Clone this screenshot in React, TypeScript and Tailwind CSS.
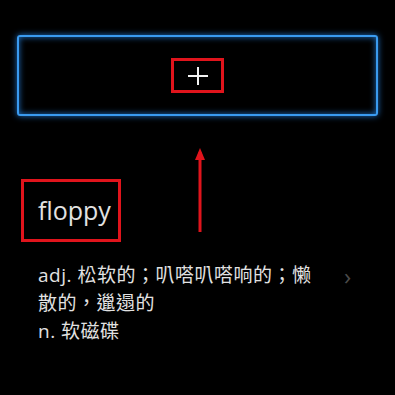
export default function App() {
  return (
    <div className="w-[395px] h-[395px] bg-black overflow-hidden pt-[35px] px-[17px] font-['Open_Sans','Noto_Sans_CJK_TC',sans-serif] text-[#e2e2e2]">
      <div className="h-[81px] rounded-[3px] border-2 border-[#3a9bf0] shadow-[0_0_6px_#1f6fc0,inset_0_0_6px_#1f6fc0] flex items-center justify-center">
        <div className="w-[53px] h-[35px] border-[3px] border-[#e0141c] flex items-center justify-center">
          <svg width="22" height="18" viewBox="0 0 22 18">
            <path d="M1 9H21M11 0V18" stroke="#f2f2f2" strokeWidth="2" />
          </svg>
        </div>
      </div>
      <div className="flex items-end mt-[34px] h-[92px]">
        <div className="ml-[4px] w-[100px] h-[63px] border-[3px] border-[#e0141c] flex items-center pl-[14px] text-[25px]">
          floppy
        </div>
        <svg className="ml-[74px] mb-[10px]" width="10" height="84" viewBox="0 0 10 84">
          <path d="M5 4V84" stroke="#e0141c" strokeWidth="3" />
          <path d="M0 12L5 0L10 12Z" fill="#e0141c" />
        </svg>
      </div>
      <div className="flex mt-[19px]">
        <div className="ml-[21px] w-[288px] text-[19px] leading-[28px] tracking-[0.5px]">
          <div>adj. 松软的；叭嗒叭嗒响的；懒散的，邋遢的</div>
          <div>n. 软磁碟</div>
        </div>
        <span className="ml-[18px] mt-[1px] text-[24px] leading-[28px] text-[#4a4a4a]">›</span>
      </div>
    </div>
  );
}
